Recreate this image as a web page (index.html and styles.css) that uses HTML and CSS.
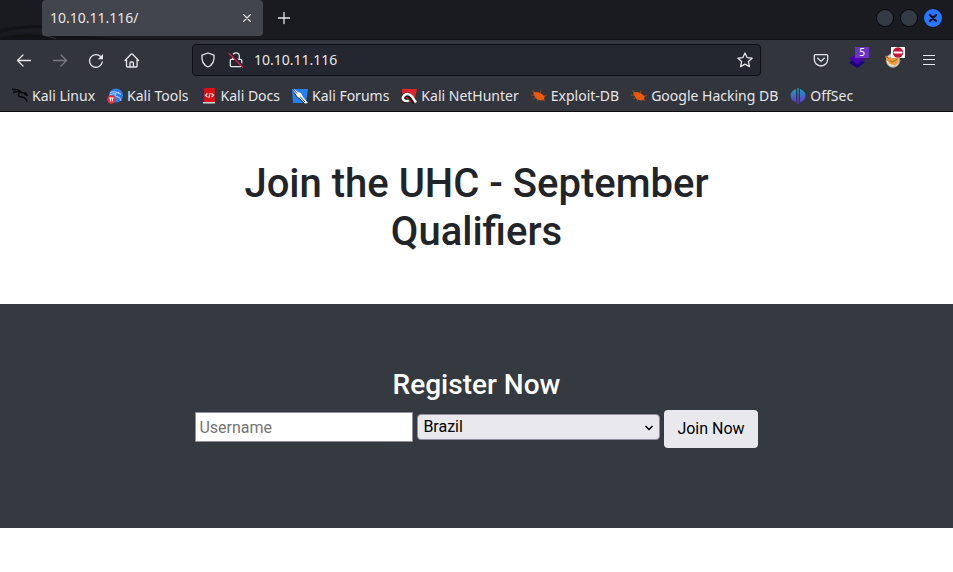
FILE: index.html
```html
<!DOCTYPE html>
<html lang="en">
<head>
<meta charset="utf-8">
<meta name="viewport" content="width=device-width, initial-scale=1">
<title>10.10.11.116/</title>
<link rel="stylesheet" href="styles.css">
</head>
<body>
<div class="browser">
  <div class="tabbar">
    <svg class="wallpaper" viewBox="0 0 130 40" aria-hidden="true"><path d="M0 30Q18 26 42 26L42 29Q18 29 0 34zM42 36Q78 36 122 40H0V38Q20 34 42 36z" fill="#121317"/><path d="M42 36Q52 38 56 40" stroke="#34363c" fill="none"/></svg>
    <div class="tab">
      <span class="tab-title">10.10.11.116/</span>
      <button class="tab-close" aria-label="Close tab"><svg viewBox="0 0 16 16"><path d="M4.500 4.500l7 7M11.500 4.500l-7 7" stroke-width="1.100"/></svg></button>
    </div>
    <button class="tool" aria-label="New tab"><svg viewBox="0 0 16 16"><path d="M8 2.500v11M2.500 8h11"/></svg></button>
    <div class="window-controls">
      <button class="dot" aria-label="Minimize"></button>
      <button class="dot" aria-label="Maximize"></button>
      <button class="dot dot-close" aria-label="Close window"><svg viewBox="0 0 18 18"><path d="M6 6l6 6M12 6l-6 6"/></svg></button>
    </div>
  </div>
  <nav class="toolbar" aria-label="Navigation">
    <button class="tool" aria-label="Back"><svg viewBox="0 0 16 16"><path d="M14.500 8.500H1.500M7 3L1.500 8.500 7 14"/></svg></button>
    <button class="tool" aria-label="Forward" disabled><svg viewBox="0 0 16 16"><path d="M1.500 8.500h13M9 3l5.500 5.500L9 14"/></svg></button>
    <button class="tool" aria-label="Reload"><svg viewBox="0 0 16 16"><path d="M14.300 10A6.400 6.400 0 1 1 12.600 4.500"/><path d="M15 2v5.200H9.800z" fill="currentColor" stroke="none"/></svg></button>
    <button class="tool" aria-label="Home"><svg viewBox="0 0 16 16"><path d="M1 8.500L7 2.300a1.100 1.100 0 0 1 1.600 0L14.600 8.500M2.500 7.500v6.500a1 1 0 0 0 1 1h8.600a1 1 0 0 0 1-1V7.500M6 15v-4a1 1 0 0 1 1-1h1.400a1 1 0 0 1 1 1v4"/></svg></button>
    <div class="urlbar">
      <svg class="icon" viewBox="0 0 16 16"><path d="M8 1L14 3.200C14.500 8 13.500 12.500 8 15 2.500 12.500 1.500 8 2 3.200z"/></svg>
      <svg class="icon" viewBox="0 0 16 16"><path d="M4.700 7V4.200a3.300 3.300 0 0 1 6.600 0V7M3.300 7.400h9.400a1 1 0 0 1 1 1v5.200a1 1 0 0 1-1 1H3.300a1 1 0 0 1-1-1V8.400a1 1 0 0 1 1-1z"/><path d="M2.500 1.200l13 13.300" class="slash-edge"/><path d="M1 1.500l13.500 13.500" class="slash"/></svg>
      <input class="address" type="text" value="10.10.11.116" aria-label="Address">
      <svg class="icon" viewBox="0 0 16 16"><path d="M8 1l2.100 4.600 5 .6-3.700 3.400 1 5L8 12.100l-4.400 2.500 1-5L.9 6.200l5-.6z"/></svg>
    </div>
    <button class="tool" aria-label="Pocket"><svg viewBox="0 0 16 16"><path d="M2.300 2.600h11.400a1 1 0 0 1 1 1v3.700a6.700 6.700 0 0 1-13.400 0V3.600a1 1 0 0 1 1-1zM4.700 6.300L8 9.400l3.300-3.100"/></svg></button>
    <button class="tool" aria-label="Wappalyzer"><svg viewBox="0 0 16 16"><path d="M0 10.500l8-4 8 4-8 5.500z" fill="#1b0080" stroke="none"/><path d="M0 6.800L8 1.500l8 5.300-8 5.200z" fill="#4b00ae" stroke="none"/></svg><span class="badge">5</span></button>
    <button class="tool" aria-label="FoxyProxy"><svg viewBox="0 0 16 16"><circle cx="8" cy="8.500" r="6.900" fill="#d9d5d0" stroke="#8a8783" stroke-width=".8"/><path d="M0 3.500l4 1.800h7.500L14 4.500 13 11l-3 2.500H6.500L3 11z" fill="#f39b35" stroke="none"/><path d="M1 4.500l3 2M5 8.500l2 1.500 2-1 3-2" stroke="#8a5a28" stroke-width=".9"/><path d="M2.500 9.500Q4 13.500 8.500 13.500" stroke="#fff1db" stroke-width="1"/></svg><svg class="badge badge-stop" viewBox="0 0 14 11"><circle cx="7" cy="5.500" r="5.200" fill="#c61637" stroke="none"/><path d="M3.500 5.500h7" stroke="#fff" stroke-width="2"/></svg></button>
    <button class="tool" aria-label="Menu"><svg viewBox="0 0 16 16"><path d="M2.500 3.500h11M2.500 7.500h11M2.500 12.500h11" stroke-width="1.200"/></svg></button>
  </nav>
  <nav class="bookmarks" aria-label="Bookmarks">
    <a href="#"><svg viewBox="0 0 16 16"><path d="M0 1.200l6 .8 5 3M1 4.500l5-1 5 1.500M8 4.200Q4.500 7.700 8.500 8.800 14 9.200 15 14M10 4.700l3.700.2 1.300 2.300-3-1" fill="none" stroke="#08090b" stroke-width="1.400"/></svg>Kali Linux</a>
    <a href="#"><svg viewBox="0 0 16 16"><circle cx="9" cy="7.500" r="7" fill="#2b7bf3"/><path d="M3 4.500q5-2 9 1M2.500 7q4-2 7-1M8.500 5.500q-2 3 2.500 3.500 3 1 3 4M11 4l3 2.500" fill="none" stroke="#c9dfff" stroke-width=".9"/><circle cx="4.300" cy="11.500" r="4.200" fill="#e72d35"/><path d="M2 10h4.700M3.400 10v3.500M5.300 10v3.500" stroke="#fff" fill="none"/></svg>Kali Tools</a>
    <a href="#"><svg viewBox="0 0 16 16"><path d="M1 0h2v15H1z" fill="#302c70"/><path d="M3 0h11v14H3z" fill="#d80f13"/><path d="M2 14h12v1.500H2z" fill="#d8d4d2"/><path d="M6.400 5.500L4.500 7.300l1.900 1.800M10.600 5.500l1.900 1.800-1.900 1.800M9.200 4.800L7.800 9.800" stroke="#fff" stroke-width="1.100" fill="none"/></svg>Kali Docs</a>
    <a href="#"><svg viewBox="0 0 16 16"><path d="M0 1h16l-2 14H1z" fill="#247ff0"/><path d="M0 0l6 4 3 1 2 4 5 6-3 .5-5-5-3-1.500-2-4z" fill="#f8fafc"/><path d="M0 0l5 5.500M8 8.500l5 5.500M2.500 5l2.500 4 3 2 4 4" stroke="#25272c" stroke-width=".9" fill="none"/></svg>Kali Forums</a>
    <a href="#"><svg viewBox="0 0 16 16"><path d="M1 1h15l-3 13H8L1 5z" fill="#df242c"/><path d="M14 14.500L10.500 10Q6.500 5 3.400 7.600 1 10.800 3.600 12.700l4.200.4" fill="none" stroke="#16181c" stroke-width="4.500"/><path d="M15 14.500L11 8.600Q7.500 4.300 3.400 7.100 0 10.400 3.600 12.700l4.200.4" fill="none" stroke="#fff" stroke-width="2.500"/></svg>Kali NetHunter</a>
    <a href="#"><svg viewBox="0 0 16 16"><path d="M2 4.500l3-.5 3 .5 3 1.500 2 2 1.500.5-1.500 1 .5 2-3.500 1-4-1-2-2.500z" fill="#ed5a0c"/><path d="M0 7l4 .5M1 2.500l5 3M2 11l4-2M6 13.500l2-3M10 2.500L9 6M10 11l4 2M13 8l3-.5" stroke="#bd501c" stroke-width=".7"/></svg>Exploit-DB</a>
    <a href="#"><svg viewBox="0 0 16 16"><path d="M2 4.500l3-.5 3 .5 3 1.500 2 2 1.500.5-1.500 1 .5 2-3.500 1-4-1-2-2.500z" fill="#ed5a0c"/><path d="M0 7l4 .5M1 2.500l5 3M2 11l4-2M6 13.500l2-3M10 2.500L9 6M10 11l4 2M13 8l3-.5" stroke="#bd501c" stroke-width=".7"/></svg>Google Hacking DB</a>
    <a href="#"><svg viewBox="0 0 16 16"><defs><linearGradient id="offsec" gradientUnits="userSpaceOnUse" x1="8" y1="0" x2="8" y2="16"><stop stop-color="#16a8bd"/><stop offset="1" stop-color="#6a28d8"/></linearGradient></defs><path d="M6 1v13.500Q.5 12 .5 7.500T6 1zM10 1v13.500q5.500-2.500 5.500-7T10 1zM7.300 0h1.400v16H7.300z" fill="url(#offsec)"/></svg>OffSec</a>
  </nav>
</div>
<main>
  <header class="hero"><h1>Join the UHC - September Qualifiers</h1></header>
  <section class="register">
    <h2>Register Now</h2>
    <form class="form">
      <input class="username" type="text" placeholder="Username" aria-label="Username">
      <div class="country">
        <select aria-label="Country"><option>Brazil</option></select>
        <svg class="chevron" viewBox="0 0 10 10" aria-hidden="true"><path d="M1.500 3L5 6.500 8.500 3"/></svg>
      </div>
      <button class="join" type="button">Join Now</button>
    </form>
  </section>
</main>
</body>
</html>
```
FILE: styles.css
```css
* { box-sizing: border-box; }
body { margin: 0; background: #fff; color: #212529; font: 16px/24px Roboto, sans-serif; }
button, input, select { font: inherit; margin: 0; }
svg { display: block; flex: none; }

.browser { background: #33353d; color: #e6e6e8; font: 14px/20px "Noto Sans", sans-serif; border-bottom: 1px solid #0c0c0f; }
.browser button { border: 0; padding: 0; background: none; color: inherit; }
.browser button svg, .icon { fill: none; stroke: currentColor; stroke-width: 1.3; stroke-linecap: round; stroke-linejoin: round; }

.tabbar { position: relative; display: flex; align-items: flex-start; height: 40px; padding: 0 11px 0 42px; background: #1a1b20; border-bottom: 1px solid #121318; }
.wallpaper { position: absolute; left: 0; bottom: 0; width: 130px; height: 40px; }
.tab { position: relative; display: flex; align-items: center; justify-content: space-between; flex: 0 1 221px; height: 36px; margin-right: 5px; padding: 0 8px; background: #43454c; border-radius: 4px; }
.tab-close { width: 16px; height: 16px; }
.tabbar .tool { height: 36px; }
.window-controls { display: flex; align-items: center; gap: 6px; height: 36px; margin-left: auto; }
.browser .dot { width: 18px; height: 18px; border: 1px solid #08090b; border-radius: 50%; background: #343a46; }
.browser .dot-close { border: 0; background: #2777ff; color: #0b1020; }
.browser .dot-close svg { stroke-width: 2.2; }

.toolbar { display: flex; align-items: center; gap: 4px; height: 40px; padding: 0 8px; }
.tool { position: relative; display: grid; place-items: center; flex: none; width: 32px; height: 32px; }
.tool > svg:first-child { width: 16px; height: 16px; }
.tool:disabled { opacity: .4; }
.urlbar { display: flex; flex: 1; align-items: center; gap: 12px; min-width: 0; height: 32px; margin: 0 40px; padding: 0 7px; background: #252730; border: 1px solid #0e0f14; border-radius: 4px; }
.icon { width: 16px; height: 16px; }
.address { flex: 1; min-width: 0; margin-left: -2px; padding: 0; border: 0; outline: 0; background: none; color: inherit; }
.icon .slash-edge { stroke: #252730; stroke-width: 2; }
.icon .slash { stroke: #e21d50; }
.badge { position: absolute; top: 3px; right: 4px; width: 14px; height: 11px; background: #6935c2; color: #fff; font-size: 10px; line-height: 11px; text-align: center; }
.badge-stop { background: #fff; }

.bookmarks { display: flex; gap: 12px; height: 31px; padding: 0 12px; align-items: center; white-space: nowrap; overflow: hidden; }
.bookmarks a { display: flex; align-items: center; gap: 4px; color: inherit; text-decoration: none; }
.bookmarks svg { width: 16px; height: 16px; }

h1, h2 { margin: 0; font-weight: 500; text-align: center; }
.hero { padding: 48px 15px; }
h1 { max-width: 570px; margin: 0 auto; font-size: 40px; line-height: 48px; }
.register { padding: 64px 15px 80px; background: #343a40; color: #fff; }
h2 { margin-bottom: 8px; font-size: 28px; line-height: 34px; }
.form { display: flex; align-items: center; justify-content: center; gap: 4px; }
.username, .country { margin-bottom: 4px; }
.username { flex: 0 1 218px; min-width: 0; height: 30px; padding: 1px 3px; border: 1px solid #8f8f9d; background: #fff; }
.username::placeholder { color: #757575; opacity: 1; }
.country { position: relative; flex: 0 1 243px; }
select { appearance: none; display: block; width: 100%; height: 26px; padding: 0 20px 0 5px; border: 1px solid #8f8f9d; border-radius: 4px; background: #e9e9ed; color: #000; }
.chevron { position: absolute; top: 9px; right: 6px; width: 10px; height: 10px; fill: none; stroke: #000; stroke-width: 1.5; pointer-events: none; }
.join { height: 38px; padding: 0 13px; border: 0; border-radius: 4px; background: #e9e9ed; color: #000; }
```
